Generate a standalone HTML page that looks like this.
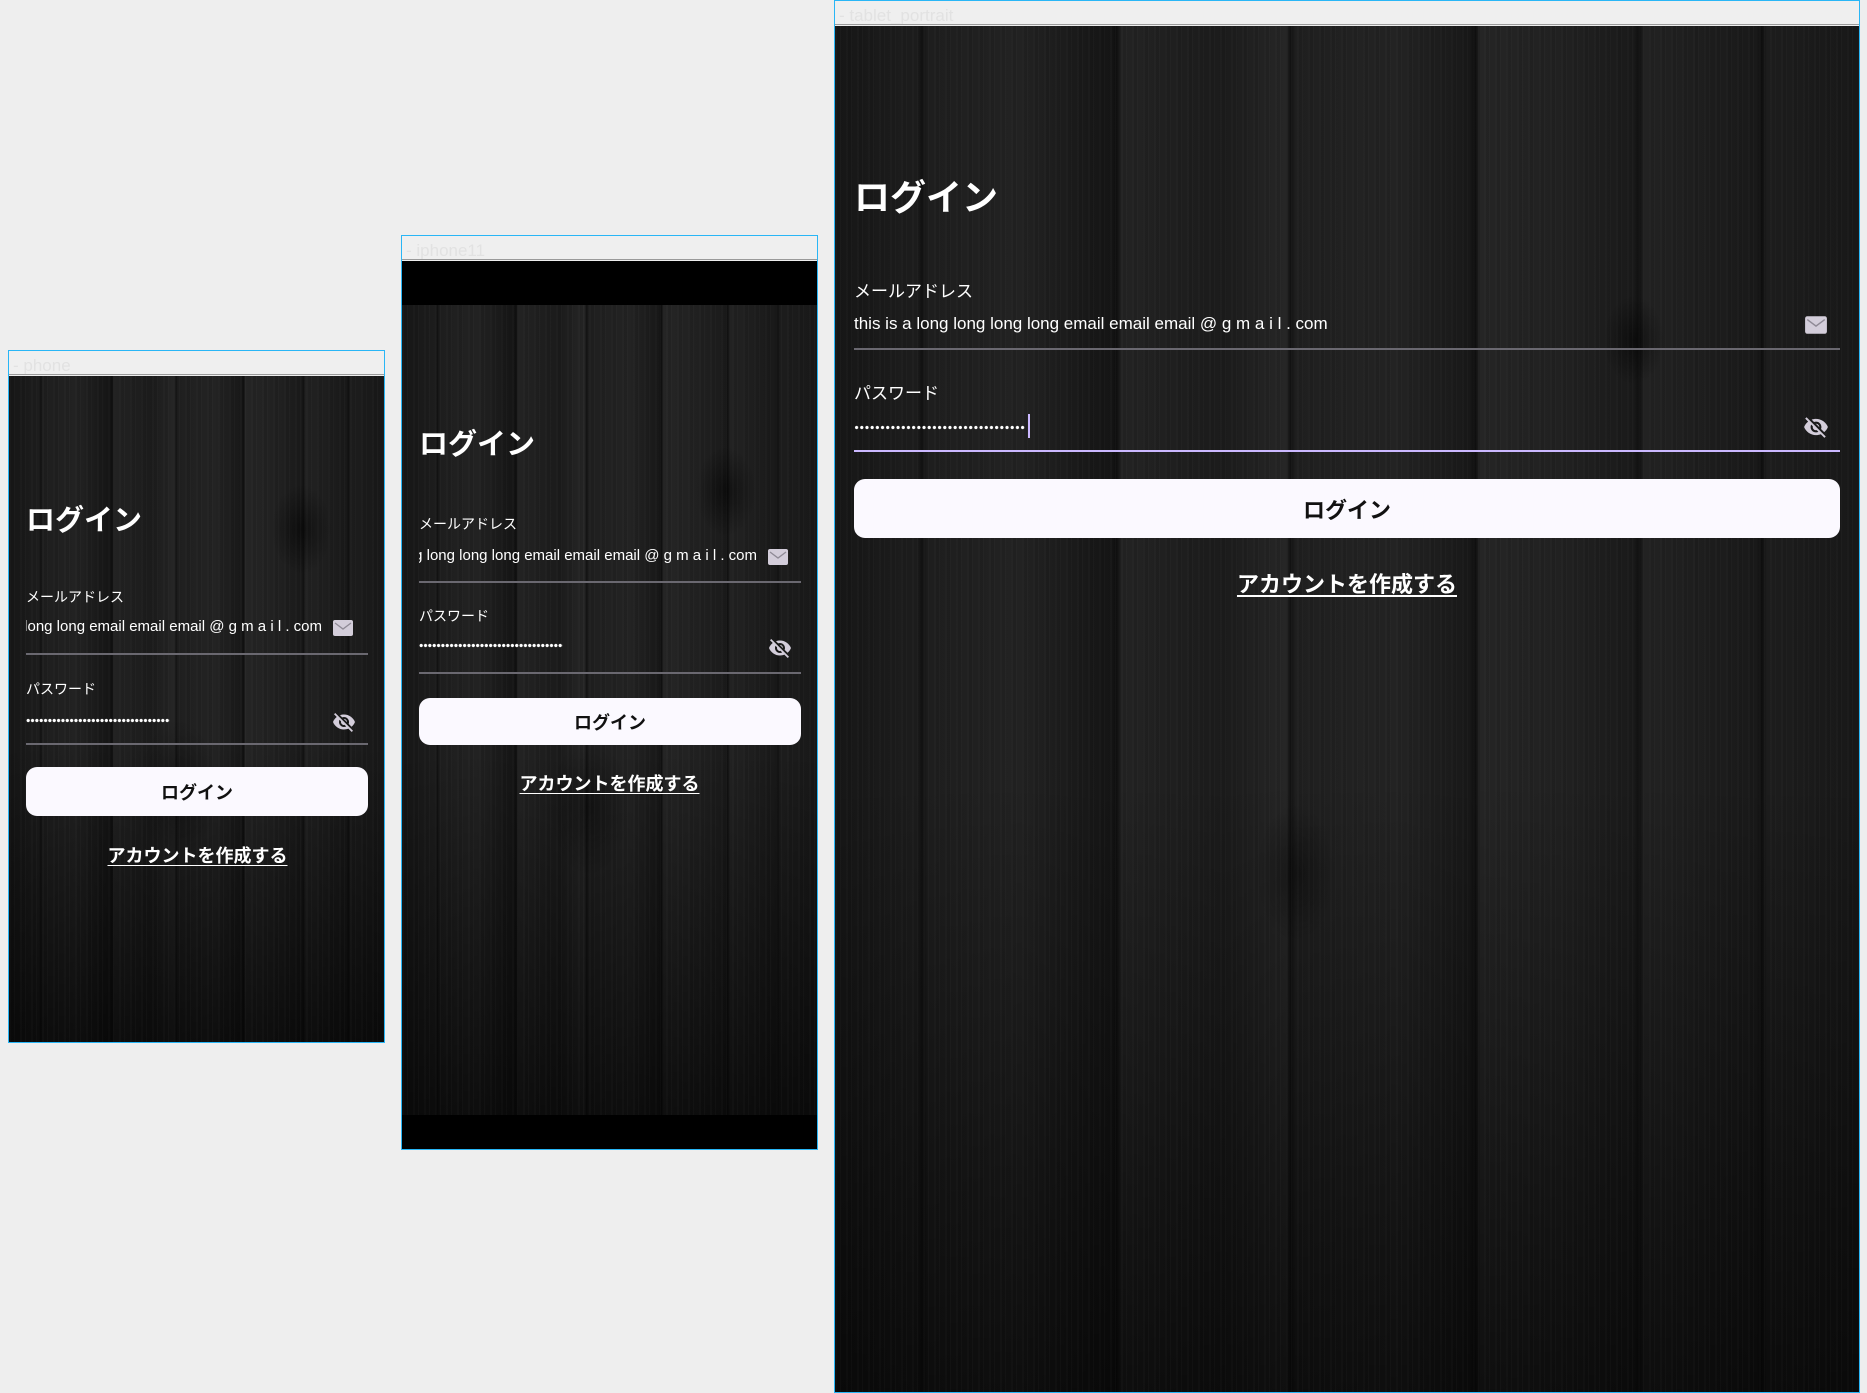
<!DOCTYPE html>
<html><head><meta charset="utf-8">
<style>
*{margin:0;padding:0;box-sizing:border-box}
body{width:1867px;height:1392px;background:#eeeeee;position:relative;overflow:hidden;font-family:"Liberation Sans","Noto Sans CJK JP",sans-serif}
.frame{position:absolute;border:1px solid #29b6f6;background:#eeeeee;overflow:hidden}
.tb{position:absolute;left:0;right:0;top:0;height:24px;background:#efefef;border-bottom:1px solid #9a9a9a;color:#e2e2e2;font-size:17px;padding-left:4px;line-height:30px;overflow:hidden}
.bg{position:absolute;left:0;right:0;bottom:0;
background:
radial-gradient(ellipse 30px 45px at 78% 23%, rgba(0,0,0,.5), transparent),
radial-gradient(ellipse 40px 70px at 45% 62%, rgba(0,0,0,.35), transparent),
linear-gradient(180deg, rgba(0,0,0,0) 55%, rgba(0,0,0,.6) 100%),
linear-gradient(90deg,#161616 0,#1d1d1d 8%,#111 8.5%,#1e1e1e 9%,#222 18%,#151515 27%,#0f0f0f 27.5%,#232323 28%,#1b1b1b 38%,#262626 44%,#121212 44.5%,#1f1f1f 45%,#232323 55%,#181818 62%,#0e0e0e 62.5%,#252525 63%,#202020 72%,#1a1a1a 78%,#101010 78.5%,#222 79%,#191919 90%,#0f0f0f 90.5%,#1d1d1d 91%,#181818 100%);}
.bg::after{content:"";position:absolute;inset:0;background:repeating-linear-gradient(90deg,rgba(255,255,255,.015) 0 2px,rgba(0,0,0,.05) 2px 5px,rgba(255,255,255,.02) 5px 6px,rgba(0,0,0,0) 6px 11px)}
.c{position:absolute;color:#fff;white-space:nowrap}
.h{font-weight:bold}
.ln{position:absolute;height:2px;background:#6a6870}
.field{position:absolute;overflow:hidden;display:flex;justify-content:flex-end;color:#fff;white-space:nowrap}
.btn{position:absolute;background:#fbf9ff;border-radius:11px;color:#111;font-weight:bold;display:flex;align-items:center;justify-content:center}
.lk{position:absolute;color:#fff;font-weight:bold;text-decoration:underline;text-underline-offset:3px;text-align:center;white-space:nowrap}
.dots{position:absolute;height:5px;background:radial-gradient(circle at 50% 50%,#fff 1.4px,transparent 1.9px);background-size:4.35px 5px}
svg{position:absolute}
</style></head><body>

<!-- PHONE -->
<div class="frame" style="left:8px;top:350px;width:377px;height:693px">
 <div class="tb">- phone</div>
 <div class="bg" style="top:25px"></div>
 <div class="c h" style="left:17px;top:146px;font-size:29px">ログイン</div>
 <div class="c" style="left:17px;top:236px;font-size:14px">メールアドレス</div>
 <div class="field" style="left:17px;top:267px;width:296px;font-size:15px">this is a long long long long email email email @ g m a i l . com</div>
 <svg style="left:323px;top:268px" width="22" height="18" viewBox="0 0 22 18"><rect x="1" y="1" width="20" height="16" rx="2" fill="#d3cdda"/><path d="M3 4l8 6 8-6" stroke="#8f8a96" stroke-width="1.3" fill="none"/></svg>
 <div class="ln" style="left:17px;width:342px;top:302px"></div>
 <div class="c" style="left:17px;top:328px;font-size:14px">パスワード</div>
 <div class="dots" style="left:17px;top:367px;width:144px"></div>
 <svg style="left:323px;top:359px" width="24" height="24" viewBox="0 0 24 24"><path fill="#d3cdda" d="M12 7c2.76 0 5 2.24 5 5 0 .65-.13 1.26-.36 1.83l2.92 2.92c1.51-1.26 2.7-2.89 3.43-4.75-1.73-4.39-6-7.5-11-7.5-1.4 0-2.74.25-3.98.7l2.16 2.16C10.74 7.13 11.35 7 12 7zM2 4.27l2.28 2.28.46.46C3.08 8.3 1.78 10.02 1 12c1.73 4.39 6 7.5 11 7.5 1.55 0 3.03-.3 4.38-.84l.42.42L19.73 22 21 20.73 3.27 3 2 4.27zM7.53 9.8l1.55 1.55c-.05.21-.08.43-.08.65 0 1.66 1.34 3 3 3 .22 0 .44-.03.65-.08l1.55 1.55c-.67.33-1.41.53-2.2.53-2.76 0-5-2.24-5-5 0-.79.2-1.53.53-2.2zm4.31-.78l3.15 3.15.02-.16c0-1.66-1.34-3-3-3l-.17.01z"/></svg>
 <div class="ln" style="left:17px;width:342px;top:392px"></div>
 <div class="btn" style="left:17px;top:416px;width:342px;height:49px;font-size:18px">ログイン</div>
 <div class="lk" style="left:0;width:377px;top:491px;font-size:18px">アカウントを作成する</div>
</div>

<!-- IPHONE11 -->
<div class="frame" style="left:401px;top:235px;width:417px;height:915px">
 <div class="tb">- iphone11</div>
 <div style="position:absolute;left:0;right:0;top:25px;height:44px;background:#000"></div>
 <div class="bg" style="top:69px;bottom:34px"></div>
 <div style="position:absolute;left:0;right:0;bottom:0;height:34px;background:#000"></div>
 <div class="c h" style="left:17px;top:185px;font-size:29px">ログイン</div>
 <div class="c" style="left:17px;top:278px;font-size:14px">メールアドレス</div>
 <div class="field" style="left:17px;top:311px;width:338px;font-size:15px">this is a long long long long email email email @ g m a i l . com</div>
 <svg style="left:365px;top:312px" width="22" height="18" viewBox="0 0 22 18"><rect x="1" y="1" width="20" height="16" rx="2" fill="#d3cdda"/><path d="M3 4l8 6 8-6" stroke="#8f8a96" stroke-width="1.3" fill="none"/></svg>
 <div class="ln" style="left:17px;width:382px;top:345px"></div>
 <div class="c" style="left:17px;top:370px;font-size:14px">パスワード</div>
 <div class="dots" style="left:17px;top:407px;width:144px"></div>
 <svg style="left:366px;top:400px" width="24" height="24" viewBox="0 0 24 24"><path fill="#d3cdda" d="M12 7c2.76 0 5 2.24 5 5 0 .65-.13 1.26-.36 1.83l2.92 2.92c1.51-1.26 2.7-2.89 3.43-4.75-1.73-4.39-6-7.5-11-7.5-1.4 0-2.74.25-3.98.7l2.16 2.16C10.74 7.13 11.35 7 12 7zM2 4.27l2.28 2.28.46.46C3.08 8.3 1.78 10.02 1 12c1.73 4.39 6 7.5 11 7.5 1.55 0 3.03-.3 4.38-.84l.42.42L19.73 22 21 20.73 3.27 3 2 4.27zM7.53 9.8l1.55 1.55c-.05.21-.08.43-.08.65 0 1.66 1.34 3 3 3 .22 0 .44-.03.65-.08l1.55 1.55c-.67.33-1.41.53-2.2.53-2.76 0-5-2.24-5-5 0-.79.2-1.53.53-2.2zm4.31-.78l3.15 3.150.02-.16c0-1.66-1.34-3-3-3l-.17.01z"/></svg>
 <div class="ln" style="left:17px;width:382px;top:436px"></div>
 <div class="btn" style="left:17px;top:462px;width:382px;height:47px;font-size:18px">ログイン</div>
 <div class="lk" style="left:0;width:415px;top:534px;font-size:18px">アカウントを作成する</div>
</div>

<!-- TABLET -->
<div class="frame" style="left:834px;top:0;width:1026px;height:1393px">
 <div class="tb">- tablet_portrait</div>
 <div class="bg" style="top:25px"></div>
 <div class="c h" style="left:19px;top:168px;font-size:36px">ログイン</div>
 <div class="c" style="left:19px;top:276px;font-size:17px">メールアドレス</div>
 <div class="c" style="left:19px;top:313px;font-size:17px">this is a long long long long email email email @ g m a i l . com</div>
 <svg style="left:969px;top:314px" width="24" height="20" viewBox="0 0 22 18"><rect x="1" y="1" width="20" height="16" rx="2" fill="#d3cdda"/><path d="M3 4l8 6 8-6" stroke="#8f8a96" stroke-width="1.3" fill="none"/></svg>
 <div class="ln" style="left:19px;width:986px;top:347px"></div>
 <div class="c" style="left:19px;top:378px;font-size:17px">パスワード</div>
 <div class="dots" style="left:19px;top:424px;width:172px;background-size:5.2px 5px"></div>
 <div style="position:absolute;left:193px;top:413px;width:2px;height:24px;background:#cbb8ff"></div>
 <svg style="left:968px;top:413px" width="26" height="26" viewBox="0 0 24 24"><path fill="#d3cdda" d="M12 7c2.76 0 5 2.24 5 5 0 .65-.13 1.26-.36 1.83l2.92 2.92c1.51-1.26 2.7-2.89 3.43-4.75-1.73-4.39-6-7.5-11-7.5-1.4 0-2.74.25-3.98.7l2.16 2.16C10.74 7.13 11.35 7 12 7zM2 4.27l2.28 2.28.46.46C3.08 8.3 1.78 10.02 1 12c1.73 4.39 6 7.5 11 7.5 1.55 0 3.03-.3 4.38-.84l.42.42L19.73 22 21 20.73 3.27 3 2 4.27zM7.53 9.8l1.55 1.55c-.05.21-.08.43-.08.65 0 1.66 1.34 3 3 3 .22 0 .44-.03.65-.08l1.55 1.55c-.67.33-1.41.53-2.2.53-2.76 0-5-2.24-5-5 0-.79.2-1.53.53-2.2zm4.31-.78l3.15 3.15.02-.16c0-1.66-1.34-3-3-3l-.17.01z"/></svg>
 <div class="ln" style="left:19px;width:986px;top:449px;background:#cbb8ff"></div>
 <div class="btn" style="left:19px;top:478px;width:986px;height:59px;font-size:22px">ログイン</div>
 <div class="lk" style="left:0;width:1024px;top:566px;font-size:22px">アカウントを作成する</div>
</div>

</body></html>
